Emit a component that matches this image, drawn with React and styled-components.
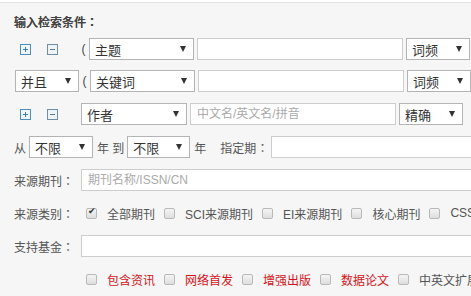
import { Fragment } from 'react';
import styled, { createGlobalStyle } from 'styled-components';

const GlobalStyle = createGlobalStyle`
  html, body {
    margin: 0;
    padding: 0;
    overflow: hidden;
    background: #fff;
  }
  body {
    font-family: "Liberation Sans", "Noto Sans CJK SC", sans-serif;
    font-size: 12px;
    color: #555;
  }
`;

const Page = styled.div`
  padding-top: 2px;
`;

const Panel = styled.div`
  width: 640px;
  min-height: 300px;
  border-top: 1px solid #e2e2e2;
  background: #f6f6f6;
  padding: 9px 0 0 14px;
  box-sizing: border-box;
`;

const Title = styled.div`
  height: 20px;
  line-height: 20px;
  font-size: 12px;
  font-weight: 500;
  color: #444;
  margin-bottom: 6px;
  text-shadow: 0 0 0.3px #444;
`;

const Colon = styled.span`
  font-family: "Noto Sans CJK TC", sans-serif;
`;

const Row = styled.div`
  display: flex;
  align-items: center;
  height: 22px;
  margin-bottom: ${(p) => p.$mb ?? 11}px;
`;

const IconGroup = styled.div`
  display: flex;
  align-items: center;
  gap: 16px;
  width: 58px;
  padding-left: 6px;
  flex: none;
`;

const IconBtn = styled.svg`
  width: 11px;
  height: 11px;
  display: block;
`;

const Paren = styled.span`
  width: 11px;
  flex: none;
  text-align: center;
  color: #444;
  font-size: 12px;
`;

const SelectBox = styled.div`
  width: ${(p) => p.$w}px;
  height: 22px;
  box-sizing: border-box;
  border: 1px solid #b4b4b4;
  background: #fff;
  display: flex;
  align-items: center;
  justify-content: space-between;
  padding: 0 7px 0 5px;
  flex: none;
  margin-left: ${(p) => p.$ml ?? 0}px;
  font-size: 13px;
  color: #333;
  &::after {
    content: '';
    border-left: 3px solid transparent;
    border-right: 3px solid transparent;
    border-top: 6px solid #333;
  }
`;

const TextInput = styled.input`
  width: ${(p) => (p.$w ? `${p.$w}px` : 'auto')};
  flex: ${(p) => (p.$w ? 'none' : '1')};
  height: 22px;
  box-sizing: border-box;
  border: 1px solid #cdcdcd;
  background: #fff;
  margin: 0 0 0 ${(p) => p.$ml ?? 0}px;
  padding: 0 6px;
  font-family: inherit;
  font-size: 12px;
  outline: none;
  &::placeholder {
    color: #aaa;
  }
`;

const Label = styled.span`
  width: ${(p) => (p.$w ? `${p.$w}px` : 'auto')};
  flex: none;
  color: #555;
  font-size: 12px;
  margin-left: ${(p) => p.$ml ?? 0}px;
  margin-right: ${(p) => p.$mr ?? 0}px;
  white-space: nowrap;
`;

const CheckList = styled.div`
  display: flex;
  align-items: center;
  padding-left: 5px;
  white-space: nowrap;
`;

const Check = styled.span`
  width: 11px;
  height: 11px;
  box-sizing: border-box;
  border: 1px solid #b9b9b9;
  border-radius: 2px;
  background: linear-gradient(#f4f4f4, #dedede);
  margin-right: 10px;
  flex: none;
  position: relative;
  &::after {
    content: ${(p) => (p.$checked ? "'✔'" : 'none')};
    position: absolute;
    left: 1px;
    top: -3px;
    font-size: 9px;
    color: #333;
  }
`;

const CheckText = styled.span`
  margin-right: 9px;
  color: ${(p) => (p.$red ? '#d2141a' : '#555')};
  font-size: 12px;
`;

const Plus = () => (
  <IconBtn viewBox="0 0 11 11">
    <rect x="0.5" y="0.5" width="10" height="10" fill="#eef5fb" stroke="#4e8fbf" />
    <path d="M3 5.5h5M5.5 3v5" stroke="#3c7fb2" strokeWidth="1" />
  </IconBtn>
);

const Minus = () => (
  <IconBtn viewBox="0 0 11 11">
    <rect x="0.5" y="0.5" width="10" height="10" fill="#eef3f7" stroke="#6f8ea6" />
    <path d="M3 5.5h5" stroke="#5b7c96" strokeWidth="1" />
  </IconBtn>
);

const categories = [
  { text: '全部期刊', checked: true },
  { text: 'SCI来源期刊' },
  { text: 'EI来源期刊' },
  { text: '核心期刊' },
  { text: 'CSSCI' },
];

const extras = [
  { text: '包含资讯', red: true },
  { text: '网络首发', red: true },
  { text: '增强出版', red: true },
  { text: '数据论文', red: true },
  { text: '中英文扩展' },
];

const App = () => {
  return (
    <Page>
      <GlobalStyle />
      <Panel>
        <Title>输入检索条件<Colon>：</Colon></Title>

        <Row $mb={10}>
          <IconGroup>
            <Plus />
            <Minus />
          </IconGroup>
          <Paren>(</Paren>
          <SelectBox $w={105}>主题</SelectBox>
          <TextInput $w={206} $ml={3} />
          <SelectBox $w={64} $ml={3}>词频</SelectBox>
        </Row>

        <Row>
          <SelectBox $w={64} $ml={1}>并且</SelectBox>
          <Paren>(</Paren>
          <SelectBox $w={105}>关键词</SelectBox>
          <TextInput $w={206} $ml={3} />
          <SelectBox $w={64} $ml={3}>词频</SelectBox>
        </Row>

        <Row>
          <IconGroup>
            <Plus />
            <Minus />
          </IconGroup>
          <SelectBox $w={106} $ml={3}>作者</SelectBox>
          <TextInput $w={206} $ml={3} placeholder="中文名/英文名/拼音" />
          <SelectBox $w={64} $ml={3}>精确</SelectBox>
        </Row>

        <Row>
          <Label $w={15}>从</Label>
          <SelectBox $w={64}>不限</SelectBox>
          <Label $ml={4} $mr={3}>年 到</Label>
          <SelectBox $w={63}>不限</SelectBox>
          <Label $ml={4} $mr={14}>年</Label>
          <Label $mr={3}>指定期<Colon>：</Colon></Label>
          <TextInput />
        </Row>

        <Row>
          <Label $w={67}>来源期刊<Colon>：</Colon></Label>
          <TextInput placeholder="期刊名称/ISSN/CN" />
        </Row>

        <Row>
          <Label $w={67}>来源类别<Colon>：</Colon></Label>
          <CheckList>
            {categories.map((c) => (
              <Fragment key={c.text}>
                <Check $checked={c.checked} />
                <CheckText>{c.text}</CheckText>
              </Fragment>
            ))}
          </CheckList>
        </Row>

        <Row>
          <Label $w={67}>支持基金<Colon>：</Colon></Label>
          <TextInput />
        </Row>

        <Row>
          <Label $w={67} />
          <CheckList>
            {extras.map((c) => (
              <Fragment key={c.text}>
                <Check />
                <CheckText $red={c.red}>{c.text}</CheckText>
              </Fragment>
            ))}
          </CheckList>
        </Row>
      </Panel>
    </Page>
  );
};

export default App;
